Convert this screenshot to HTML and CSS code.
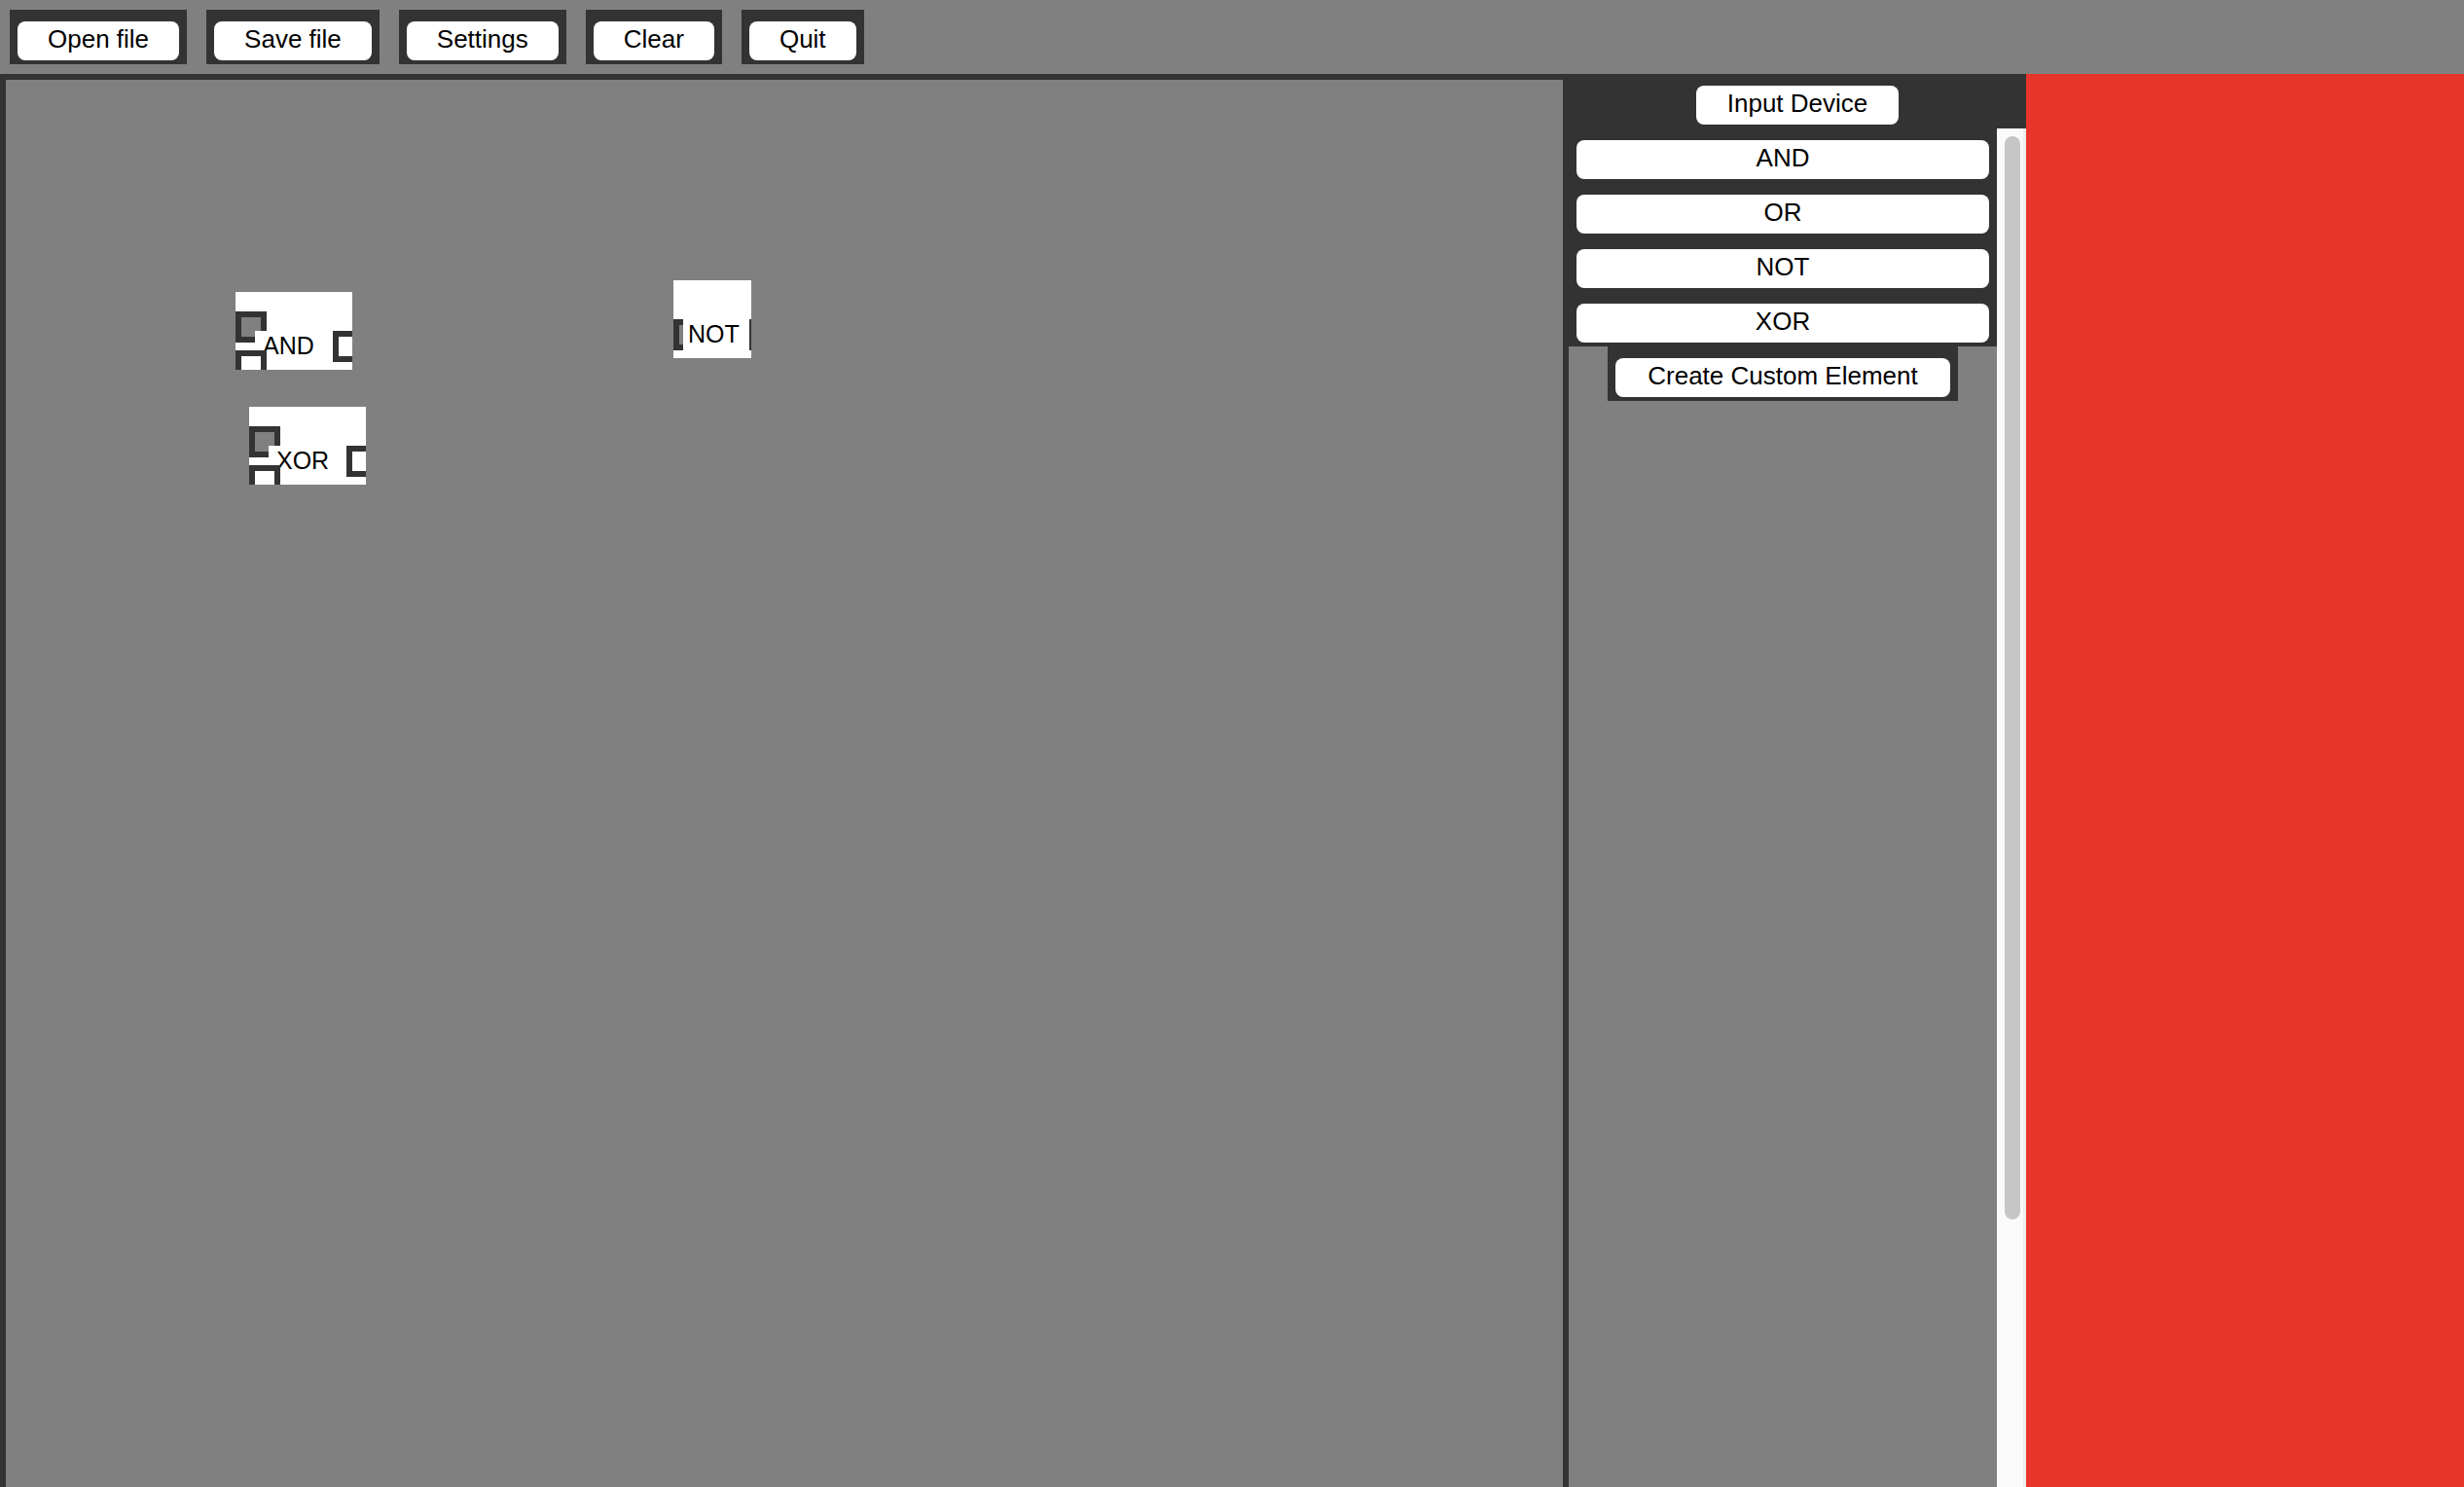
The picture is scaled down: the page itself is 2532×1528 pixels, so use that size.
FILE: index.html
```html
<!DOCTYPE html>
<html lang="en">
<head>
    <meta charset="UTF-8">
    <title>Logic Simulator</title>
    <link rel="stylesheet" href="styles.css">
</head>
<body>

    <!-- Barra de ferramentas -->
    <div class="toolbar">
        <div class="tool"><button>Open file</button></div>
        <div class="tool"><button>Save file</button></div>
        <div class="tool"><button>Settings</button></div>
        <div class="tool"><button>Clear</button></div>
        <div class="tool"><button>Quit</button></div>
    </div>

    <div class="workspace">
        <!-- Area de desenho dos circuitos -->
        <div class="canvas">
            <div class="gate" style="left: 236px; top: 218px;">
                <div class="port port-a active"></div>
                <div class="label">AND</div>
                <div class="port port-b"></div>
                <div class="port port-out"></div>
            </div>

            <div class="gate" style="left: 250px; top: 336px;">
                <div class="port port-a active"></div>
                <div class="label">XOR</div>
                <div class="port port-b"></div>
                <div class="port port-out"></div>
            </div>

            <div class="gate gate-small" style="left: 686px; top: 206px;">
                <div class="port port-single active"></div>
                <div class="label">NOT</div>
                <div class="port port-out"></div>
            </div>
        </div>

        <!-- Lista de elementos -->
        <div class="sidebar">
            <div class="sidebar-head">
                <button class="input-device">Input Device</button>
            </div>
            <div class="sidebar-body">
                <div class="element-list">
                    <div class="element"><button>AND</button></div>
                    <div class="element"><button>OR</button></div>
                    <div class="element"><button>NOT</button></div>
                    <div class="element"><button>XOR</button></div>
                    <div class="custom"><button>Create Custom Element</button></div>
                </div>
                <div class="scrollbar"><div class="thumb"></div></div>
            </div>
        </div>

        <div class="preview"></div>
    </div>

</body>
</html>
```

FILE: styles.css
```css
/* Estilo geral */
body {
    margin: 0;
    height: 100vh;
    overflow: hidden;
    background-color: #808080;
    font-family: 'Liberation Sans', Arial, sans-serif;
    font-size: 26px;
    display: flex;
    flex-direction: column;
}

button {
    height: 40px;
    padding: 0 31px 3px;
    border: none;
    border-radius: 8px;
    background-color: white;
    color: black;
    font-family: inherit;
    font-size: 26px;
    cursor: pointer;
}

/* Barra de ferramentas */
.toolbar {
    height: 76px;
    box-sizing: border-box;
    padding: 10px 0 0 10px;
    display: flex;
    align-items: flex-start;
    gap: 20px;
}

.tool {
    background-color: #333;
    padding: 12px 8px 4px 8px;
    display: flex;
}

.workspace {
    flex: 1;
    display: flex;
    min-height: 0;
}

/* Canvas */
.canvas {
    width: 1612px;
    box-sizing: border-box;
    border: 6px solid #333;
    border-bottom: none;
    position: relative;
}

.gate {
    position: absolute;
    width: 120px;
    height: 80px;
    background-color: white;
    overflow: hidden;
}

.gate-small {
    width: 80px;
}

.port {
    position: absolute;
    width: 20px;
    height: 20px;
    border: 6px solid #333;
    background-color: white;
}

.port.active {
    background-color: #808080;
}

.port-a {
    left: 0;
    top: 20px;
}

.port-b {
    left: 0;
    top: 60px;
}

.port-single {
    left: 0;
    top: 40px;
}

.port-out {
    left: 100px;
    top: 40px;
}

.gate-small .port-out {
    left: 78px;
}

.label {
    position: absolute;
    left: 20px;
    top: 40px;
    height: 40px;
    padding: 0 8px;
    background-color: white;
    font-size: 25px;
    line-height: 30px;
}

.gate-small .label {
    left: 10px;
    padding: 0 6px 0 5px;
}

/* Barra lateral */
.sidebar {
    width: 470px;
    display: flex;
    flex-direction: column;
}

.sidebar-head {
    background-color: #333;
    padding: 12px 0 4px;
    display: flex;
    justify-content: center;
}

.input-device {
    width: 208px;
    padding-left: 0;
    padding-right: 0;
}

.sidebar-body {
    flex: 1;
    display: flex;
    min-height: 0;
}

.element-list {
    flex: 1;
}

.element {
    background-color: #333;
    padding: 12px 8px 4px;
}

.element button {
    width: 100%;
    padding-left: 0;
    padding-right: 0;
}

.custom {
    width: 360px;
    box-sizing: border-box;
    margin: 0 auto;
    background-color: #333;
    padding: 12px 8px 4px;
}

.custom button {
    width: 100%;
    padding-left: 0;
    padding-right: 0;
}

.scrollbar {
    width: 30px;
    box-sizing: border-box;
    background-color: #fafafa;
    border-right: 3px solid #ededed;
}

.thumb {
    width: 16px;
    height: 1113px;
    margin: 8px 0 0 8px;
    border-radius: 8px;
    background-color: #c6c6c6;
}

/* Painel vermelho */
.preview {
    flex: 1;
    background-color: #e8352a;
}
```
